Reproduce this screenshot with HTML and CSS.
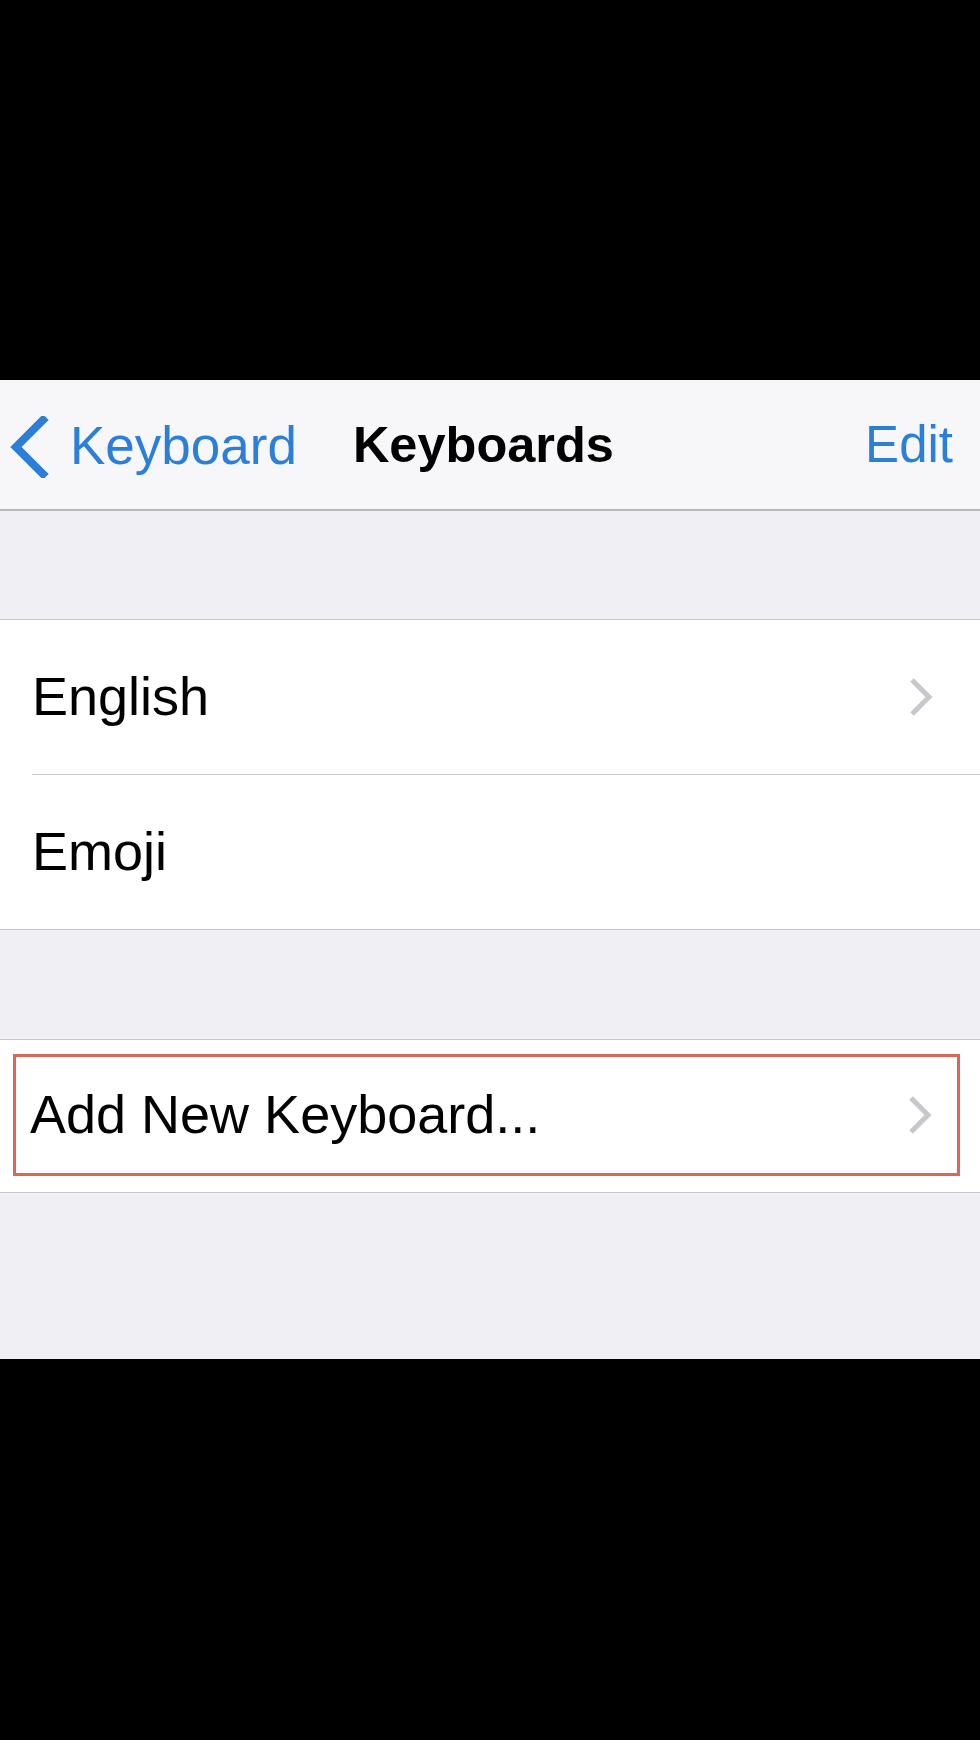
FILE: index.html
```html
<!DOCTYPE html>
<html>
<head>
<meta charset="utf-8">
<meta name="viewport" content="width=device-width, initial-scale=1">
<title>Keyboards</title>
<link rel="stylesheet" href="styles.css">
</head>
<body>

<div class="blackbar top"></div>

<div class="screen">

  <p class="navbar">
    <a href="#" class="back">
      <svg class="ico-back" width="40" height="62" viewBox="0 0 40 62"><path d="M34 4 L7 31 L34 58" fill="none" stroke="#2b7fd8" stroke-width="8" stroke-linecap="square" stroke-linejoin="miter"/></svg>
      <span>Keyboard</span>
    </a>
    <strong class="title">Keyboards</strong>
    <a href="#" class="edit">Edit</a>
  </p>

  <div class="gap g1"></div>

  <ul class="group">
    <li class="row"><span>English</span><i class="chev"><svg width="26" height="40" viewBox="0 0 26 40"><path d="M4 3 L21 20 L4 37" fill="none" stroke="#c7c7cc" stroke-width="5"/></svg></i></li>
    <li class="row"><span>Emoji</span></li>
  </ul>

  <div class="gap g2"></div>

  <ul class="group">
    <li class="row mark">
      <div class="hl"><span>Add New Keyboard...</span><i class="chev"><svg width="26" height="40" viewBox="0 0 26 40"><path d="M4 3 L21 20 L4 37" fill="none" stroke="#c7c7cc" stroke-width="5"/></svg></i></div>
    </li>
  </ul>

  <div class="gap g3"></div>

</div>

<div class="blackbar bottom"></div>

</body>
</html>
```

FILE: styles.css
```css
html, body { margin:0; padding:0; }
body { background:#000; font-family:"Liberation Sans", Arial, sans-serif; color:#000; }
a { text-decoration:none; }
i { font-style:normal; }

.blackbar.top { height:380px; }
.blackbar.bottom { height:380px; }

.screen { background:#efeff4; }

p.navbar { margin:0; height:129px; background:#f7f7f9; border-bottom:2px solid #b9b9bd; display:flex; align-items:center; padding:0 27px 0 9px; }
p.navbar a { color:#2b7fd8; font-size:53px; }
.back { display:flex; align-items:center; gap:21px; margin-top:4px; }
.back span { position:relative; top:-1px; }
.title { font-size:50.5px; font-weight:bold; margin-left:56px; }
.edit { margin-left:auto; font-size:51px !important; }

.gap.g1 { height:108px; }
.gap.g2 { height:109px; }
.gap.g3 { height:166px; }

ul.group { list-style:none; margin:0; padding:0 0 0 32px; background:#fff; border-top:1px solid #c8c7cc; border-bottom:1px solid #c8c7cc; }
li.row { height:154px; display:flex; align-items:center; padding-right:46px; font-size:54px; border-bottom:1px solid #c8c7cc; }
li.row:last-child { border-bottom:none; }
li.row span { flex:1; position:relative; top:-1px; }
.chev { display:flex; }

li.row.mark { margin-left:-32px; padding:14px 20px 16px 13px; height:auto; }
.hl { flex:1; box-sizing:border-box; height:122px; border:3px solid #d9685c; display:flex; align-items:center; padding:0 24px 0 14px; }
.hl span { flex:1; }
```
